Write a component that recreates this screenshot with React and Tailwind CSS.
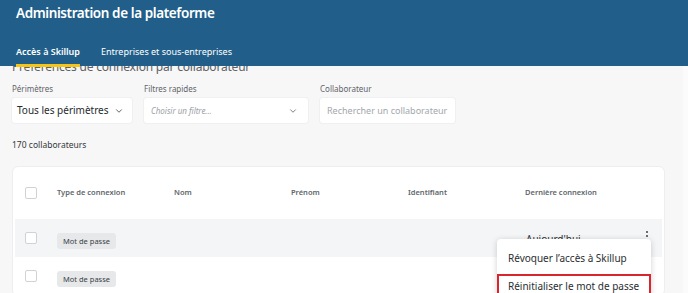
import React from "react";
import { ChevronDown } from "lucide-react";

function Checkbox() {
  return <div className="w-[12px] h-[12px] rounded-[2px] border border-[#cfd3d6] bg-white" />;
}

function Badge() {
  return (
    <span className="inline-block rounded-[3px] bg-[#e6e8ea] px-[6px] py-[2px] text-[7.5px] leading-[12px] text-[#3a3f44]">
      Mot de passe
    </span>
  );
}

const cols = ["Type de connexion", "Nom", "Prénom", "Identifiant", "Dernière connexion"];

export default function App() {
  return (
    <div
      className="relative w-[688px] h-[293px] overflow-hidden whitespace-nowrap bg-[#f7f7f7] text-[#2d3236]"
      style={{ fontFamily: '"Noto Sans", "Open Sans", sans-serif' }}
    >
      {/* Top bar */}
      <header className="relative z-10 h-[66px] bg-[#215f8a] px-[16px] text-white">
        <h1 className="pt-[4px] text-[13.5px] leading-[18px] font-semibold tracking-[-0.4px]">
          Administration de la plateforme
        </h1>
        <nav className="mt-[23px] flex gap-[21px] text-[9px] leading-[14px]">
          <div className="relative font-semibold">
            Accès à Skillup
            <div className="absolute left-0 right-0 top-[19px] h-[3px] bg-[#f5c518]" />
          </div>
          <div>Entreprises et sous-entreprises</div>
        </nav>
      </header>

      <main className="px-[12px]">
        <h2 className="-mt-[7px] text-[12px] leading-[16px] tracking-[-0.2px] text-[#5c6166]">
          Préférences de connexion par collaborateur
        </h2>

        <div className="mt-[8px] flex gap-[12px]">
          <div>
            <div className="text-[8px] leading-[12px] text-[#5f6469]">Périmètres</div>
            <div className="mt-[3px] flex h-[25px] w-[120px] items-center justify-between rounded-[3px] bg-white pl-[5px] pr-[8px] shadow-[0_0_0_1px_#eef0f1]">
              <span className="text-[10px] text-[#262a2e]">Tous les périmètres</span>
              <ChevronDown size={10} strokeWidth={2} className="text-[#444]" />
            </div>
          </div>
          <div>
            <div className="text-[8px] leading-[12px] text-[#5f6469]">Filtres rapides</div>
            <div className="mt-[3px] flex h-[25px] w-[164px] items-center justify-between rounded-[3px] bg-white pl-[7px] pr-[10px] shadow-[0_0_0_1px_#eef0f1]">
              <span className="text-[8px] italic text-[#9aa0a5]">Choisir un filtre...</span>
              <ChevronDown size={10} strokeWidth={2} className="text-[#666]" />
            </div>
          </div>
          <div>
            <div className="text-[8px] leading-[12px] text-[#5f6469]">Collaborateur</div>
            <div className="mt-[3px] flex h-[25px] w-[135px] items-center rounded-[3px] bg-white pl-[7px] shadow-[0_0_0_1px_#eef0f1]">
              <span className="text-[9px] text-[#a2a7ab]">Rechercher un collaborateur</span>
            </div>
          </div>
        </div>

        <div className="mt-[15px] text-[8.5px] leading-[14px] text-[#33383c]">170 collaborateurs</div>

        {/* Table */}
        <div className="mt-[14px] w-[653px] rounded-[6px] border border-[#eceeef] bg-white px-[2px]">
          <div className="grid h-[52px] grid-cols-[42px_117px_117px_117px_117px_1fr] items-center text-[7.5px] font-semibold text-[#60666b]">
            <div className="pl-[10px]"><Checkbox /></div>
            {cols.map((c) => (
              <div key={c}>{c}</div>
            ))}
          </div>
          <div className="grid h-[38px] grid-cols-[42px_117px_117px_117px_117px_1fr] items-center bg-[#f4f5f6]">
            <div className="pl-[10px]"><Checkbox /></div>
            <div><Badge /></div>
            <div />
            <div />
            <div />
            <div className="flex items-center justify-between pr-[14px]">
              <span className="pl-[1px] pt-[3px] text-[10px] text-[#2d3236]">Aujourd'hui</span>
              <span className="flex flex-col gap-[2px] pb-[5px]">
                <span className="h-[2px] w-[2px] rounded-full bg-[#3b4045]" />
                <span className="h-[2px] w-[2px] rounded-full bg-[#3b4045]" />
                <span className="h-[2px] w-[2px] rounded-full bg-[#3b4045]" />
              </span>
            </div>
          </div>
          <div className="grid h-[38px] grid-cols-[42px_117px_117px_117px_117px_1fr] items-center">
            <div className="pl-[10px]"><Checkbox /></div>
            <div><Badge /></div>
          </div>
        </div>
      </main>

      {/* Row action menu */}
      <div className="absolute left-[497px] top-[239px] z-20 w-[154px] rounded-[4px] bg-white pt-[9px] shadow-[0_1px_6px_rgba(0,0,0,0.18)]">
        <div className="px-[11px] py-[3px] text-[10px] leading-[14px] text-[#2a2e32]">Révoquer l’accès à Skillup</div>
        <div className="mt-[6px] border-2 border-[#d9262c] px-[9px] pt-[3px] pb-[6px] text-[10px] leading-[14px] text-[#2a2e32]">
          Réinitialiser le mot de passe
        </div>
      </div>

      <div className="absolute right-0 top-[66px] h-[227px] w-[5px] bg-[#fbfbfb]" />
    </div>
  );
}
